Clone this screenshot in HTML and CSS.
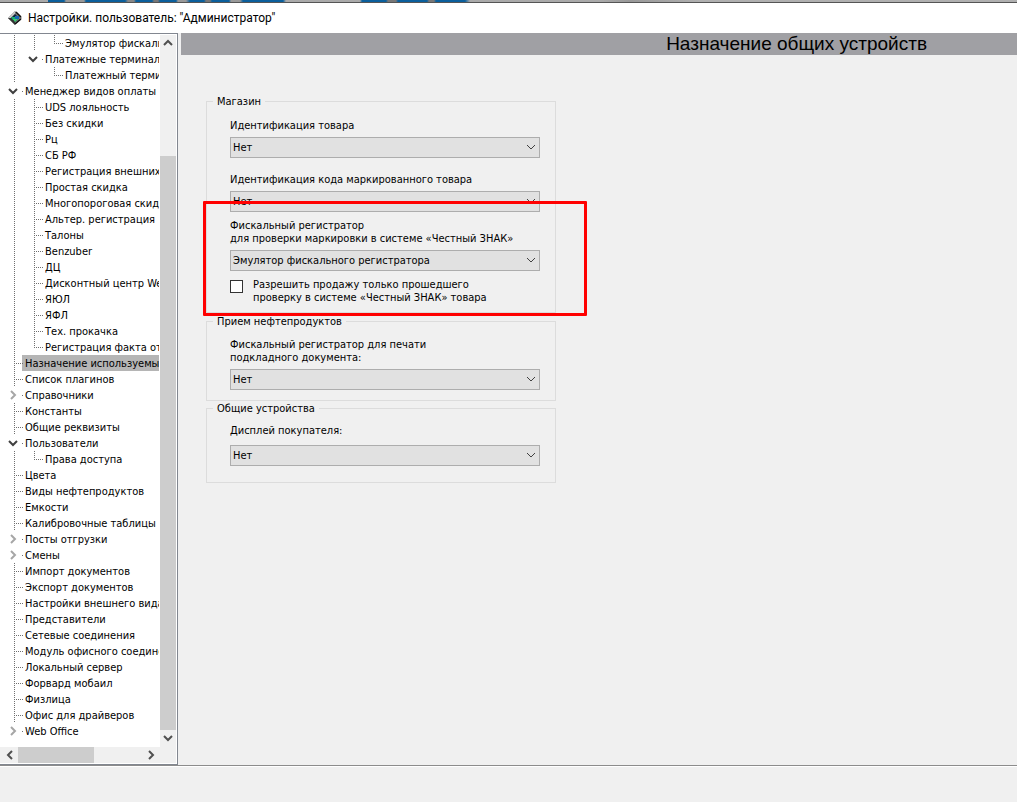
FILE: index.html
```
<!DOCTYPE html>
<html lang="ru">
<head>
<meta charset="utf-8">
<title>Настройки</title>
<link rel="stylesheet" href="styles.css">
</head>
<body>
<svg class="defs" aria-hidden="true">
  <symbol id="down" viewBox="0 0 10 10"><path d="M1 3L5 7L9 3" fill="none" stroke="currentColor"/></symbol>
  <symbol id="right" viewBox="0 0 10 10"><path d="M3 1L7 5L3 9" fill="none" stroke="currentColor"/></symbol>
  <symbol id="left" viewBox="0 0 10 10"><path d="M7 1L3 5L7 9" fill="none" stroke="currentColor"/></symbol>
  <symbol id="up" viewBox="0 0 10 10"><path d="M1 7L5 3L9 7" fill="none" stroke="currentColor"/></symbol>
</svg>
<div class="backdrop"></div>
<header class="titlebar">
  <svg class="logo" viewBox="0 0 14 14" aria-hidden="true">
    <path d="M7 0L14 7L7 14L0 7Z" fill="#777"/>
    <path d="M7 0L0 7L3 7L7 3Z" fill="#c8c8c8"/>
    <path d="M8 1L13 6M13 8L7 13" fill="none" stroke="#111" stroke-width="1.5"/>
    <path d="M0 7L7 14L7 11L3 7Z" fill="#333"/>
    <path d="M7 3L11 7L7 11L3 7Z" fill="#10233c"/>
    <path d="M3 6H7V9H5Z" fill="#16b070"/>
    <path d="M7 5H11V8H7Z" fill="#1767b5"/>
    <path d="M5 8H10L7 11Z" fill="#40d070"/>
  </svg>
  <span>Настройки. пользователь: "Администратор"</span>
</header>
<div class="workspace">
  <nav class="sidebar" aria-label="Разделы настроек">
    <ul class="tree">
      <li><i class="v"></i><i class="v"></i><i class="l"></i><span>Эмулятор фискального регистратора</span></li>
      <li><i class="v"></i><i class="x"><svg><use href="#down"/></svg></i><span>Платежные терминалы</span></li>
      <li><i class="v"></i><i></i><i class="l"></i><span>Платежный терминал</span></li>
      <li><i class="x"><svg><use href="#down"/></svg></i><span>Менеджер видов оплаты</span></li>
      <li><i class="v"></i><i class="v t"></i><span>UDS лояльность</span></li>
      <li><i class="v"></i><i class="v t"></i><span>Без скидки</span></li>
      <li><i class="v"></i><i class="v t"></i><span>Рц</span></li>
      <li><i class="v"></i><i class="v t"></i><span>СБ РФ</span></li>
      <li><i class="v"></i><i class="v t"></i><span>Регистрация внешних</span></li>
      <li><i class="v"></i><i class="v t"></i><span>Простая скидка</span></li>
      <li><i class="v"></i><i class="v t"></i><span>Многопороговая скидка</span></li>
      <li><i class="v"></i><i class="v t"></i><span>Альтер. регистрация</span></li>
      <li><i class="v"></i><i class="v t"></i><span>Талоны</span></li>
      <li><i class="v"></i><i class="v t"></i><span>Benzuber</span></li>
      <li><i class="v"></i><i class="v t"></i><span>ДЦ</span></li>
      <li><i class="v"></i><i class="v t"></i><span>Дисконтный центр Web</span></li>
      <li><i class="v"></i><i class="v t"></i><span>ЯЮЛ</span></li>
      <li><i class="v"></i><i class="v t"></i><span>ЯФЛ</span></li>
      <li><i class="v"></i><i class="v t"></i><span>Тех. прокачка</span></li>
      <li><i class="v"></i><i class="l"></i><span>Регистрация факта отпуска</span></li>
      <li><i class="v t"></i><span class="selected">Назначение используемых</span></li>
      <li><i class="v t"></i><span>Список плагинов</span></li>
      <li><i class="x closed"><svg><use href="#right"/></svg></i><span>Справочники</span></li>
      <li><i class="v t"></i><span>Константы</span></li>
      <li><i class="v t"></i><span>Общие реквизиты</span></li>
      <li><i class="x"><svg><use href="#down"/></svg></i><span>Пользователи</span></li>
      <li><i class="v"></i><i class="l"></i><span>Права доступа</span></li>
      <li><i class="v t"></i><span>Цвета</span></li>
      <li><i class="v t"></i><span>Виды нефтепродуктов</span></li>
      <li><i class="v t"></i><span>Емкости</span></li>
      <li><i class="v t"></i><span>Калибровочные таблицы</span></li>
      <li><i class="x closed"><svg><use href="#right"/></svg></i><span>Посты отгрузки</span></li>
      <li><i class="x closed"><svg><use href="#right"/></svg></i><span>Смены</span></li>
      <li><i class="v t"></i><span>Импорт документов</span></li>
      <li><i class="v t"></i><span>Экспорт документов</span></li>
      <li><i class="v t"></i><span>Настройки внешнего вида</span></li>
      <li><i class="v t"></i><span>Представители</span></li>
      <li><i class="v t"></i><span>Сетевые соединения</span></li>
      <li><i class="v t"></i><span>Модуль офисного соединения</span></li>
      <li><i class="v t"></i><span>Локальный сервер</span></li>
      <li><i class="v t"></i><span>Форвард мобаил</span></li>
      <li><i class="v t"></i><span>Физлица</span></li>
      <li><i class="v t"></i><span>Офис для драйверов</span></li>
      <li><i class="x closed"><svg><use href="#right"/></svg></i><span>Web Office</span></li>
    </ul>
    <div class="vbar">
      <button type="button" aria-label="Вверх"><svg><use href="#up"/></svg></button>
      <div class="track"></div>
      <div class="thumb"></div>
      <button type="button" aria-label="Вниз"><svg><use href="#down"/></svg></button>
    </div>
    <div class="hbar">
      <button type="button" aria-label="Влево"><svg><use href="#left"/></svg></button>
      <div class="thumb"></div>
      <div class="track"></div>
      <button type="button" aria-label="Вправо"><svg><use href="#right"/></svg></button>
    </div>
    <div class="corner"></div>
  </nav>
  <main class="content">
    <h1>Назначение общих устройств</h1>
    <div class="groups">
      <fieldset class="shop">
        <legend>Магазин</legend>
        <label for="goods">Идентификация товара</label>
        <div class="combo"><select id="goods"><option>Нет</option></select><svg><use href="#down"/></svg></div>
        <label class="wide-gap" for="marked">Идентификация кода маркированного товара</label>
        <div class="combo"><select id="marked"><option>Нет</option></select><svg><use href="#down"/></svg></div>
        <label class="gap" for="check">Фискальный регистратор<br>для проверки маркировки в системе «Честный ЗНАК»</label>
        <div class="combo"><select id="check"><option>Эмулятор фискального регистратора</option></select><svg><use href="#down"/></svg></div>
        <div class="permit gap">
          <input type="checkbox" id="permit">
          <label for="permit">Разрешить продажу только прошедшего<br>проверку в системе «Честный ЗНАК» товара</label>
        </div>
        <div class="highlight"></div>
      </fieldset>
      <fieldset class="fuel">
        <legend>Прием нефтепродуктов</legend>
        <label for="print">Фискальный регистратор для печати<br>подкладного документа:</label>
        <div class="combo"><select id="print"><option>Нет</option></select><svg><use href="#down"/></svg></div>
      </fieldset>
      <fieldset class="common">
        <legend>Общие устройства</legend>
        <label for="display">Дисплей покупателя:</label>
        <div class="combo"><select id="display"><option>Нет</option></select><svg><use href="#down"/></svg></div>
      </fieldset>
    </div>
  </main>
</div>
<footer class="statusbar"></footer>
</body>
</html>
```
FILE: styles.css
```
* { box-sizing: border-box; }

body {
  margin: 0;
  min-height: 100vh;
  display: flex;
  flex-direction: column;
  background: #f0f0f0;
  color: #000;
  font: 11px/13px "DejaVu Sans Condensed", "DejaVu Sans", sans-serif;
}

.defs { display: none; }

.backdrop {
  height: 3px;
  border-bottom: 1px solid #555;
  background: linear-gradient(90deg, #aaa 48px, #0b5f9c 48px 64px, #999 66px 84px, #0b5f9c 86px 125px, #888 128px 134px, #0b5f9c 136px 152px, #777 154px 158px, #0b5f9c 160px 176px, #999 178px 186px, #0b5f9c 190px 204px, #777 206px 210px, #0b5f9c 212px 229px, #999 231px 240px, #0b5f9c 243px 283px, #aaa 286px 360px, #0b5f9c 362px 386px, #777 388px 396px, #0b5f9c 398px 427px, #777 429px 434px, #0b5f9c 436px 465px, #aaa 470px 600px, #999 630px, #b0b0b0 700px);
}

.titlebar {
  height: 30px;
  display: flex;
  align-items: center;
  gap: 6px;
  padding-left: 8px;
  background: #fff;
  font: 12px/16px Roboto, "Noto Sans", sans-serif;
}
.logo { width: 14px; height: 14px; }

.workspace { flex: 1; display: flex; }

/* Navigation tree with its scroll bars */
.sidebar {
  width: 178px;
  flex: none;
  display: grid;
  grid-template: 1fr 16px / 1fr 16px;
  padding: 1px 1px 1px 0;
  border: solid #828790;
  border-width: 1px 1px 1px 0;
  background: #fff;
}
.tree {
  min-width: 0;
  margin: 0 1px 0 0;
  padding: 0 0 8px 5px;
  overflow: hidden;
  list-style: none;
}
.tree li { display: flex; height: 16px; line-height: 18px; white-space: nowrap; }
.tree span { flex: none; }
.tree .selected { background: #b5b5b5; margin-left: -3px; padding-left: 3px; }
.tree i { position: relative; flex: none; width: 20px; height: 16px; }
.v::before, .l::before {
  content: "";
  position: absolute;
  left: 9px;
  top: 0;
  width: 1px;
  height: 16px;
  background: repeating-linear-gradient(#707070 0 1px, transparent 1px 2px);
}
.l::before { height: 8px; }
.t::after, .l::after {
  content: "";
  position: absolute;
  left: 9px;
  top: 8px;
  width: 9px;
  height: 1px;
  background: repeating-linear-gradient(90deg, #707070 0 1px, transparent 1px 2px);
}
.x::after {
  content: "";
  position: absolute;
  left: 17px;
  top: 8px;
  width: 1px;
  height: 1px;
  background: #707070;
}
.x svg { position: absolute; left: 3px; top: 3px; width: 10px; height: 10px; color: #404040; stroke-width: 2; }
.closed svg { color: #a6a6a6; }

.vbar { display: flex; flex-direction: column; background: #f0f0f0; }
.hbar { display: flex; background: #f0f0f0; }
.corner { background: #f0f0f0; }
.sidebar button {
  flex: none;
  display: grid;
  place-items: center;
  width: 16px;
  height: 16px;
  padding: 0;
  border: 0;
  background: none;
  color: #505050;
}
.sidebar button svg { width: 10px; height: 10px; stroke-width: 2; }
.thumb { background: #cdcdcd; }
.vbar { padding-bottom: 1px; }
.vbar .track { flex: 105; }
.vbar .thumb { flex: 573; }
.hbar { padding: 0 1px 0 2px; }
.hbar .thumb { flex: 76; }
.hbar .track { flex: 49; }

/* Settings page */
.content { flex: 1; min-width: 0; padding-left: 3px; }
h1 {
  margin: 0;
  padding-right: 90px;
  background: #a0a0a4;
  font: 19px/22px "Liberation Sans", Arial, sans-serif;
  text-align: right;
}
.groups { width: 350px; margin: 40px 0 0 25px; }
fieldset {
  position: relative;
  margin: 0;
  padding: 11px 15px 8px 23px;
  border: 1px solid #dcdcdc;
}
legend { margin-left: -17px; padding: 0 4px; }
label { display: block; }
.combo { position: relative; margin-top: 5px; }
.combo svg { position: absolute; right: 4px; top: 5px; width: 10px; height: 10px; color: #404040; pointer-events: none; }
select {
  appearance: none;
  display: block;
  width: 100%;
  height: 21px;
  padding: 0 20px 0 2px;
  border: 1px solid #adadad;
  border-radius: 0;
  background: #e1e1e1;
  color: #000;
  font: inherit;
}
.gap { margin-top: 7px; }
.wide-gap { margin-top: 15px; }
.permit { display: flex; gap: 10px; }
.permit input {
  appearance: none;
  width: 13px;
  height: 13px;
  margin: 2px 0 0;
  border: 1px solid #333;
  background: #fff;
}
.highlight {
  position: absolute;
  left: -4px;
  right: -32px;
  top: 93px;
  bottom: -4px;
  border: 3px solid #f00;
  border-radius: 1px;
  pointer-events: none;
  z-index: 1;
}
.fuel { margin-top: 2px; padding-top: 10px; padding-bottom: 10px; }
.common { margin-top: 1px; padding-top: 9px; padding-bottom: 16px; }
.common .combo { margin-top: 8px; }

.statusbar { height: 37px; border-top: 1px solid #8c8c8c; box-shadow: inset 0 1px #fff; }
```
